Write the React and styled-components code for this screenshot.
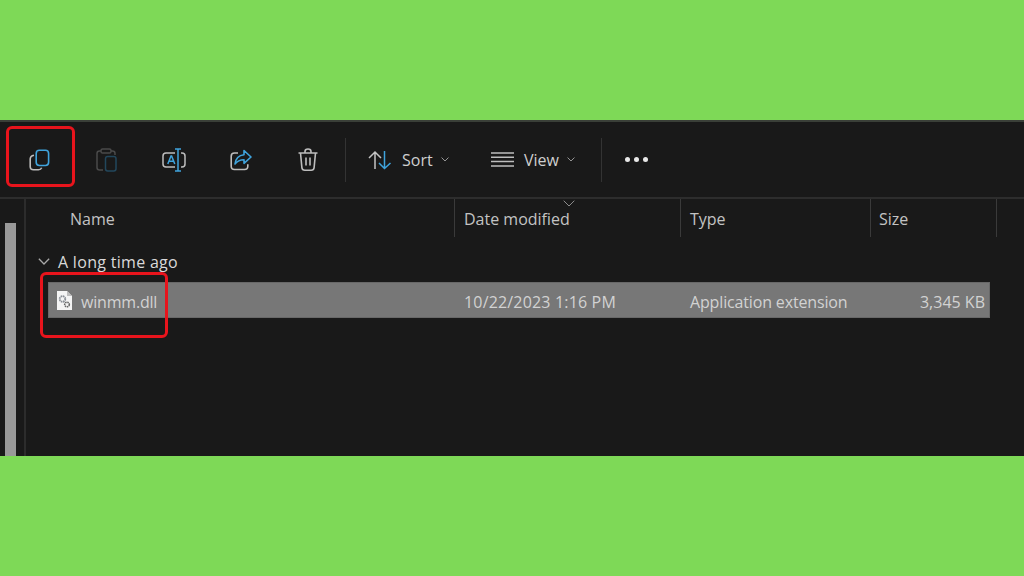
import React from "react"
import styled, { createGlobalStyle } from "styled-components"

const Global = createGlobalStyle`
html, body { margin:0; padding:0; background:#7ed957; }
body { font-family:"Open Sans","Noto Sans",sans-serif; overflow:hidden; }
`
const Page = styled.div`
width:1024px;
height:576px;
display:flex;
flex-direction:column;
justify-content:center;
background:#7ed957;
position:relative;
overflow:hidden;
`
const Win = styled.div`
height:336px;
background:#191919;
border-top:2px solid #3a3f38;
box-sizing:border-box;
display:flex;
flex-direction:column;
color:#d4d4d4;
`
const Toolbar = styled.div`
height:75px;
flex:none;
display:flex;
align-items:center;
border-bottom:2px solid #2d2d2d;
`
const IconSlot = styled.div`
width:67px;
height:40px;
flex:none;
display:flex;
align-items:center;
justify-content:center;
margin-left:${p => p.$first ? "6px" : "0"};
`
const Sep = styled.div`
width:1px;
height:44px;
background:#333;
flex:none;
margin:0 ${p => p.$right || 0}px 0 ${p => p.$left || 0}px;
`
const Tool = styled.div`
display:flex;
align-items:center;
width:${p => p.$w}px;
flex:none;
font-size:16px;
color:#cfcfcf;
`
const ToolLabel = styled.span`
margin:0 8px 0 ${p => p.$gap}px;
`
const Dots = styled.div`
display:flex;
gap:4px;
margin-left:23px;
`
const Dot = styled.i`
width:5px;
height:5px;
border-radius:50%;
background:#e8e8e8;
display:block;
`
const Body = styled.div`
flex:1;
display:flex;
min-height:0;
`
const Rail = styled.div`
width:26px;
flex:none;
box-sizing:border-box;
border-right:2px solid #2c2c2c;
padding:24px 8px 0 5px;
`
const Thumb = styled.div`
width:11px;
height:100%;
background:#999;
`
const Main = styled.div`
flex:1;
min-width:0;
position:relative;
`
const Head = styled.div`
display:flex;
height:38px;
`
const Col = styled.div`
width:${p => p.$w}px;
flex:none;
box-sizing:border-box;
padding-left:${p => p.$pad}px;
border-right:1px solid #3a3a3a;
font-size:16px;
line-height:40px;
color:#c3c3c3;
position:relative;
`
const SortMark = styled.svg`
position:absolute;
left:108px;
top:1px;
`
const Group = styled.div`
display:flex;
align-items:center;
height:45px;
padding:5px 0 0 12px;
box-sizing:border-box;
gap:8px;
font-size:16px;
letter-spacing:.3px;
color:#d9d9d9;
`
const Row = styled.div`
margin-left:22px;
width:942px;
height:36px;
box-sizing:border-box;
background:#777;
border:1px solid #686868;
display:flex;
align-items:center;
font-size:16px;
color:#d2d2d2;
`
const Cell = styled.div`
width:${p => p.$w}px;
flex:none;
box-sizing:border-box;
padding:0 0 0 ${p => p.$pad || 0}px;
display:flex;
align-items:center;
gap:${p => p.$gap || 0}px;
justify-content:${p => p.$right ? "flex-end" : "flex-start"};
white-space:nowrap;
letter-spacing:${p => p.$ls || 0}px;
`
const CellText = styled.span`
padding-top:3px;
`
const Mark = styled.div`
position:absolute;
left:${p => p.$x}px;
top:${p => p.$y}px;
width:${p => p.$w}px;
height:${p => p.$h}px;
box-sizing:border-box;
border:3px solid #e8141c;
border-radius:6px;
`

const Chevron = ({ size = 10, color = "#a8a8a8" }) => (
  <svg width={size} height={size * 0.6} viewBox="0 0 10 6" fill="none">
    <path d="M.7.7 5 5l4.3-4.3" stroke={color} strokeWidth="1.1" />
  </svg>
)

const CopyIcon = () => (
  <svg width="22" height="22" viewBox="0 0 22 22" fill="none" strokeWidth="1.6">
    <path d="M5 6.2C2.8 6.6 1.2 7.8 1.2 10v7.500c0 2 1.300 3.300 3.300 3.300h5c1.600 0 2.600-.6 3.200-2" stroke="#bdbdbd" />
    <rect x="7.200" y="1.200" width="12.400" height="15.300" rx="3.200" stroke="#3fa3dc" />
  </svg>
)
const PasteIcon = () => (
  <svg width="22" height="24" viewBox="0 0 22 24" fill="none" strokeWidth="1.5">
    <path d="M5 3H3.500C2 3 1 4 1 5.500v14C1 21 2 22 3.500 22H7M15 3h1.500C18 3 19 4 19 5.500V7" stroke="#4a4a4a" />
    <rect x="5" y="1" width="10" height="4" rx="1.600" stroke="#4a4a4a" />
    <rect x="9.500" y="8.500" width="10.500" height="14.500" rx="2.200" stroke="#22475c" />
  </svg>
)
const RenameIcon = () => (
  <svg width="24" height="24" viewBox="0 0 24 24" fill="none" strokeWidth="1.5">
    <path d="M13 5H4C2 5 1 6 1 8v8c0 2 1 3 3 3h9M19 5h1c2 0 3 1 3 3v8c0 2-1 3-3 3h-1" stroke="#bdbdbd" />
    <path d="M16 1v22M13 1h6M13 23h6" stroke="#3fa3dc" />
    <path d="M5.800 16 9 8h.6l3.200 8M7 13.300h4.800" stroke="#3fa3dc" />
  </svg>
)
const ShareIcon = () => (
  <svg width="22" height="22" viewBox="0 0 22 22" fill="none" strokeWidth="1.6">
    <path d="M8 4H4.500C2.500 4 1.200 5.200 1.200 7.200v10c0 2 1.300 3.300 3.300 3.300h10c2 0 3.300-1.300 3.300-3.300v-2" stroke="#bdbdbd" />
    <path d="M14 1.500 21 8l-7 6.300v-3.600c-4 0-6.800 1.300-9 4.300.6-5 3.600-8.600 9-9.200z" stroke="#3fa3dc" strokeLinejoin="round" />
  </svg>
)
const TrashIcon = () => (
  <svg width="20" height="23" viewBox="0 0 20 23" fill="none" stroke="#bdbdbd" strokeWidth="1.6">
    <path d="M.5 5h19M7 5V3.500C7 2 8 1 10 1s3 1 3 2.500V5M2.500 5l1.400 14.600c.2 1.700 1.200 2.600 2.900 2.600h6.400c1.700 0 2.700-.9 2.900-2.600L17.500 5M8 9.500v8M12 9.500v8" />
  </svg>
)
const SortIcon = () => (
  <svg width="24" height="20" viewBox="0 0 24 20" fill="none" strokeWidth="1.5">
    <path d="M7 19V2M1 8l6-6 6 6" stroke="#c4c4c4" />
    <path d="M16.500 1v17.500M11 13l5.500 5.500L22.500 13" stroke="#3fa3dc" />
  </svg>
)
const ViewIcon = () => (
  <svg width="23" height="15" viewBox="0 0 23 15" fill="none" stroke="#bdbdbd" strokeWidth="1.5">
    <path d="M0 1h23M0 5.300h23M0 9.600h23M0 14h23" />
  </svg>
)
const DllIcon = () => (
  <svg width="15" height="19" viewBox="0 0 15 19">
    <path d="M0 0h10l5 5v14H0z" fill="#f4f4f4" />
    <path d="M10 0l5 5h-5z" fill="#bdbdbd" />
    <circle cx="5.500" cy="8" r="2.800" fill="none" stroke="#8a8f96" strokeWidth="1.800" strokeDasharray="1.600 .6" />
    <circle cx="10" cy="13.500" r="2.300" fill="none" stroke="#666" strokeWidth="1.600" strokeDasharray="1.400 .6" />
  </svg>
)

const App = () => {
  return (
    <Page>
      <Global />
      <Win>
        <Toolbar>
          <IconSlot $first><CopyIcon /></IconSlot>
          <IconSlot><PasteIcon /></IconSlot>
          <IconSlot><RenameIcon /></IconSlot>
          <IconSlot><ShareIcon /></IconSlot>
          <IconSlot><TrashIcon /></IconSlot>
          <Sep $left={4} $right={22} />
          <Tool $w={123}><SortIcon /><ToolLabel $gap={10}>Sort</ToolLabel><Chevron size={8} /></Tool>
          <Tool $w={110}><ViewIcon /><ToolLabel $gap={10}>View</ToolLabel><Chevron size={8} /></Tool>
          <Sep />
          <Dots><Dot /><Dot /><Dot /></Dots>
        </Toolbar>
        <Body>
          <Rail><Thumb /></Rail>
          <Main>
            <Head>
              <Col $w={429} $pad={44}>Name</Col>
              <Col $w={226} $pad={9}>
                <SortMark width="12" height="7" viewBox="0 0 12 7" fill="none">
                  <path d="M.7.7 6 6 11.300.7" stroke="#8c8c8c" strokeWidth="1" />
                </SortMark>
                Date modified
              </Col>
              <Col $w={190} $pad={9}>Type</Col>
              <Col $w={126} $pad={8}>Size</Col>
            </Head>
            <Group><Chevron size={12} />A long time ago</Group>
            <Row>
              <Cell $w={406} $pad={8} $gap={9} $ls={-.2}><DllIcon /><CellText>winmm.dll</CellText></Cell>
              <Cell $w={226} $pad={9} $ls={.17}><CellText>10/22/2023 1:16 PM</CellText></Cell>
              <Cell $w={190} $pad={9} $ls={-.15}><CellText>Application extension</CellText></Cell>
              <Cell $w={114} $right><CellText>3,345 KB</CellText></Cell>
            </Row>
          </Main>
        </Body>
      </Win>
      <Mark $x={6} $y={126} $w={69} $h={61} />
      <Mark $x={40} $y={272} $w={128} $h={66} />
    </Page>
  )
}
export default App
